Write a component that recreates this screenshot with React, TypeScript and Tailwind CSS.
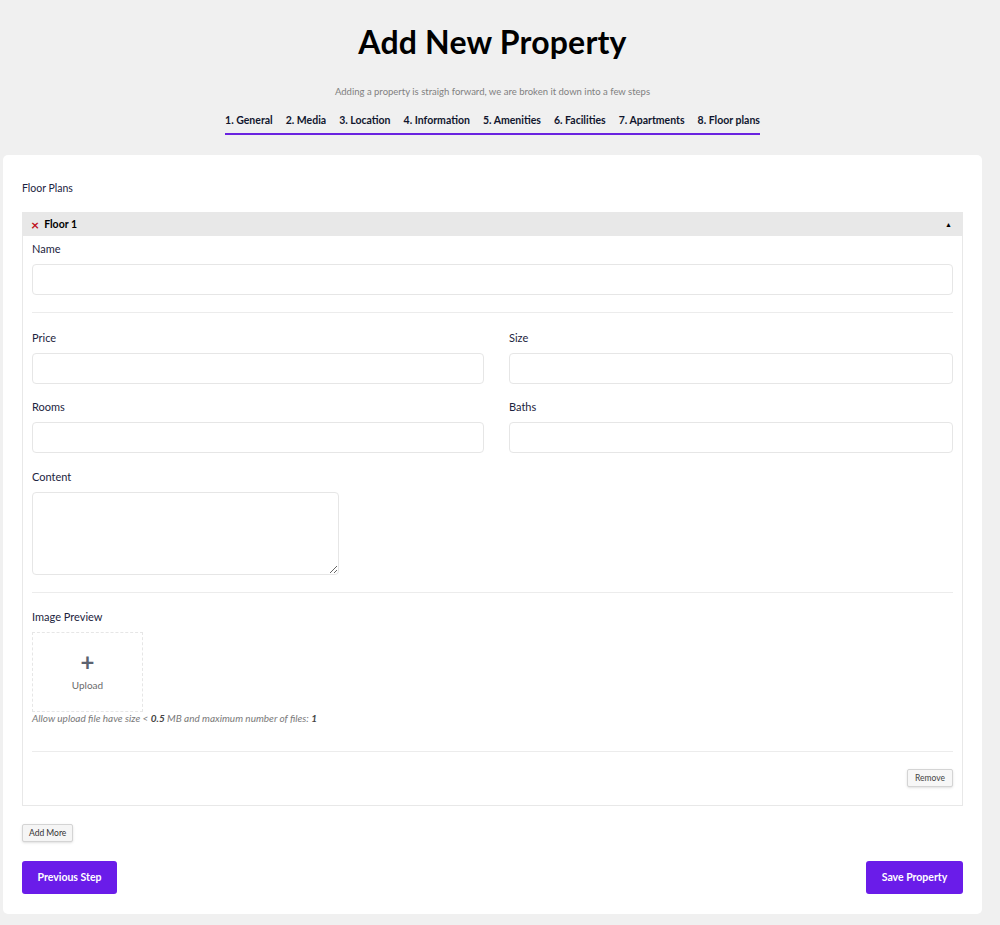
import React from 'react';

const steps = ['1. General', '2. Media', '3. Location', '4. Information', '5. Amenities', '6. Facilities', '7. Apartments', '8. Floor plans'];

const Field = ({ label, className = '' }: { label: string; className?: string }) => (
  <div className={className}>
    <label className="block text-[11px] text-[#1c2440] mb-[7px] leading-[16px]">{label}</label>
    <input className="block w-full h-[31px] rounded-[4px] border border-[#e6e6e6] bg-white outline-none" />
  </div>
);

const App: React.FC = () => {
  return (
    <div className="min-h-[925px] bg-[#f0f0f0] pt-[22px] pb-[13px] pr-[15px]" style={{ fontFamily: 'Lato, "Noto Sans", sans-serif' }}>
      <h1 className="text-center text-[32px] font-bold text-black leading-[40px] tracking-[0.2px]">Add New Property</h1>
      <p className="text-center text-[9.5px] text-[#808080] mt-[23px] leading-[14px]">
        Adding a property is straigh forward, we are broken it down into a few steps
      </p>
      <div className="flex justify-center mt-[14px]">
        <div className="flex gap-[13px] border-b-2 border-[#6a23e0] pb-[6px]">
          {steps.map((s) => (
            <span key={s} className="text-[10.5px] font-bold text-[#10162e] leading-[14px]">{s}</span>
          ))}
        </div>
      </div>

      <div className="mx-[3px] mt-[20px] bg-white rounded-[5px] px-[19px] pt-[26px] pb-[20px]">
        <div className="text-[10.5px] text-[#1c2440] leading-[14px]">Floor Plans</div>

        <div className="mt-[17px] border border-[#e8e8e8]">
          <div className="h-[23px] bg-[#e8e8e8] flex items-center justify-between px-[8px]">
            <div className="flex items-center gap-[5px]">
              <span className="text-[#c0101a] text-[14px] font-bold leading-none">×</span>
              <span className="text-[10.5px] font-bold text-black">Floor 1</span>
            </div>
            <span className="text-[7px] text-black mr-[2px]">▲</span>
          </div>

          <div className="px-[9px] pt-[5px] pb-[18px]">
            <Field label="Name" />
            <div className="border-t border-[#ececec] mt-[17px]" />
            <div className="grid grid-cols-[452px_1fr] gap-x-[25px] gap-y-[15px] mt-[17px]">
              <Field label="Price" />
              <Field label="Size" />
              <Field label="Rooms" />
              <Field label="Baths" />
            </div>
            <div className="mt-[16px]">
              <label className="block text-[11px] text-[#1c2440] mb-[7px] leading-[16px]">Content</label>
              <textarea className="block w-[307px] h-[83px] rounded-[4px] border border-[#e6e6e6] outline-none" />
            </div>
            <div className="border-t border-[#ececec] mt-[17px]" />
            <div className="mt-[16px]">
              <label className="block text-[11px] text-[#1c2440] mb-[7px] leading-[16px]">Image Preview</label>
              <div className="w-[111px] h-[80px] border border-dashed border-[#e6e6e6] flex flex-col items-center justify-center">
                <span className="text-[24px] leading-[20px] font-bold text-[#5b6270]">+</span>
                <span className="text-[10px] text-[#6b6b6b] mt-[6px]">Upload</span>
              </div>
              <p className="text-[10px] italic text-[#7a7a7a] leading-[12px]">
                Allow upload file have size &lt; <b className="text-[#444]">0.5</b> MB and maximum number of files: <b className="text-[#444]">1</b>
              </p>
            </div>
            <div className="border-t border-[#ececec] mt-[27px]" />
            <div className="flex justify-end mt-[17px]">
              <button className="h-[18px] px-[7px] text-[8.5px] text-[#444] bg-[#f7f7f7] border border-[#d4d4d4] rounded-[2px] shadow-sm">Remove</button>
            </div>
          </div>
        </div>

        <button className="mt-[18px] h-[18px] px-[6px] text-[8.5px] text-[#333] bg-[#f5f5f5] border border-[#d4d4d4] rounded-[2px] shadow-sm">Add More</button>

        <div className="flex justify-between mt-[19px]">
          <button className="w-[95px] h-[33px] rounded-[3px] bg-[#6a1ce9] text-white text-[10.5px] font-bold">Previous Step</button>
          <button className="w-[97px] h-[33px] rounded-[3px] bg-[#6a1ce9] text-white text-[10.5px] font-bold">Save Property</button>
        </div>
      </div>
    </div>
  );
};

export default App;
